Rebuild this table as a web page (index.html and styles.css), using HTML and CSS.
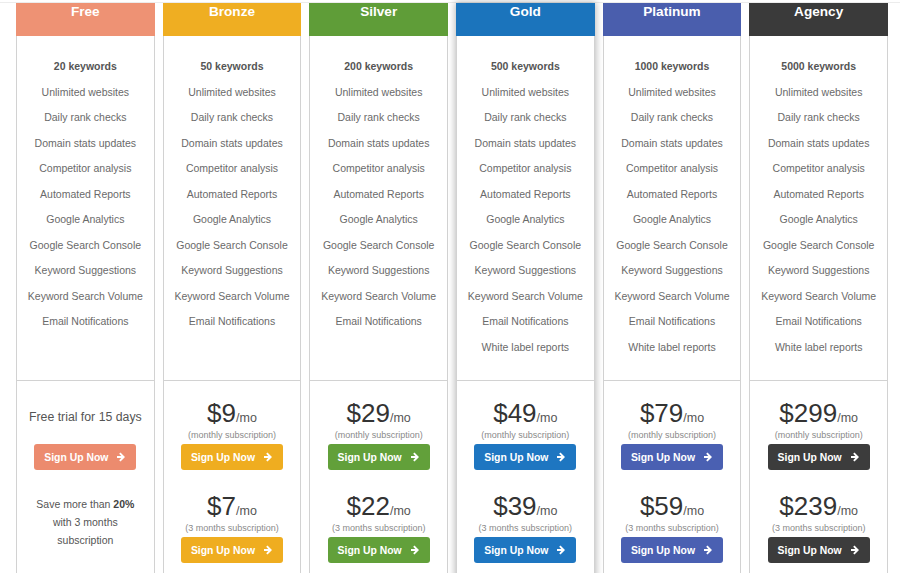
FILE: index.html
```html
<!DOCTYPE html>
<html lang="en">
<head>
<meta charset="utf-8">
<title>Pricing</title>
<link rel="stylesheet" href="styles.css">
</head>
<body>
<svg width="0" height="0" class="defs" aria-hidden="true">
  <symbol id="arrow" viewBox="0 0 10 10">
    <path d="M1 3.9h4.3L3.2 1.8 4.5 0.5 9 5 4.5 9.5 3.2 8.2 5.3 6.1H1z" fill="currentColor"/>
  </symbol>
</svg>
<div class="wrap">
  <div class="plans">

    <section class="plan free">
      <h2 class="plan-head">Free</h2>
      <ul class="features">
        <li class="kw">20 keywords</li>
        <li>Unlimited websites</li>
        <li>Daily rank checks</li>
        <li>Domain stats updates</li>
        <li>Competitor analysis</li>
        <li>Automated Reports</li>
        <li>Google Analytics</li>
        <li>Google Search Console</li>
        <li>Keyword Suggestions</li>
        <li>Keyword Search Volume</li>
        <li>Email Notifications</li>
      </ul>
      <div class="foot">
        <div class="offer">
          <div class="trial">Free trial for 15 days</div>
          <a class="btn" href="#">Sign Up Now <svg class="ico"><use href="#arrow"/></svg></a>
        </div>
        <p class="save">Save more than <b>20%</b><br>with 3 months<br>subscription</p>
      </div>
    </section>

    <section class="plan bronze">
      <h2 class="plan-head">Bronze</h2>
      <ul class="features">
        <li class="kw">50 keywords</li>
        <li>Unlimited websites</li>
        <li>Daily rank checks</li>
        <li>Domain stats updates</li>
        <li>Competitor analysis</li>
        <li>Automated Reports</li>
        <li>Google Analytics</li>
        <li>Google Search Console</li>
        <li>Keyword Suggestions</li>
        <li>Keyword Search Volume</li>
        <li>Email Notifications</li>
      </ul>
      <div class="foot">
        <div class="offer">
          <div class="price">$9<span class="per">/mo</span></div>
          <div class="sub">(monthly subscription)</div>
          <a class="btn" href="#">Sign Up Now <svg class="ico"><use href="#arrow"/></svg></a>
        </div>
        <div class="offer">
          <div class="price">$7<span class="per">/mo</span></div>
          <div class="sub">(3 months subscription)</div>
          <a class="btn" href="#">Sign Up Now <svg class="ico"><use href="#arrow"/></svg></a>
        </div>
      </div>
    </section>

    <section class="plan silver">
      <h2 class="plan-head">Silver</h2>
      <ul class="features">
        <li class="kw">200 keywords</li>
        <li>Unlimited websites</li>
        <li>Daily rank checks</li>
        <li>Domain stats updates</li>
        <li>Competitor analysis</li>
        <li>Automated Reports</li>
        <li>Google Analytics</li>
        <li>Google Search Console</li>
        <li>Keyword Suggestions</li>
        <li>Keyword Search Volume</li>
        <li>Email Notifications</li>
      </ul>
      <div class="foot">
        <div class="offer">
          <div class="price">$29<span class="per">/mo</span></div>
          <div class="sub">(monthly subscription)</div>
          <a class="btn" href="#">Sign Up Now <svg class="ico"><use href="#arrow"/></svg></a>
        </div>
        <div class="offer">
          <div class="price">$22<span class="per">/mo</span></div>
          <div class="sub">(3 months subscription)</div>
          <a class="btn" href="#">Sign Up Now <svg class="ico"><use href="#arrow"/></svg></a>
        </div>
      </div>
    </section>

    <section class="plan gold">
      <h2 class="plan-head">Gold</h2>
      <ul class="features">
        <li class="kw">500 keywords</li>
        <li>Unlimited websites</li>
        <li>Daily rank checks</li>
        <li>Domain stats updates</li>
        <li>Competitor analysis</li>
        <li>Automated Reports</li>
        <li>Google Analytics</li>
        <li>Google Search Console</li>
        <li>Keyword Suggestions</li>
        <li>Keyword Search Volume</li>
        <li>Email Notifications</li>
        <li>White label reports</li>
      </ul>
      <div class="foot">
        <div class="offer">
          <div class="price">$49<span class="per">/mo</span></div>
          <div class="sub">(monthly subscription)</div>
          <a class="btn" href="#">Sign Up Now <svg class="ico"><use href="#arrow"/></svg></a>
        </div>
        <div class="offer">
          <div class="price">$39<span class="per">/mo</span></div>
          <div class="sub">(3 months subscription)</div>
          <a class="btn" href="#">Sign Up Now <svg class="ico"><use href="#arrow"/></svg></a>
        </div>
      </div>
    </section>

    <section class="plan platinum">
      <h2 class="plan-head">Platinum</h2>
      <ul class="features">
        <li class="kw">1000 keywords</li>
        <li>Unlimited websites</li>
        <li>Daily rank checks</li>
        <li>Domain stats updates</li>
        <li>Competitor analysis</li>
        <li>Automated Reports</li>
        <li>Google Analytics</li>
        <li>Google Search Console</li>
        <li>Keyword Suggestions</li>
        <li>Keyword Search Volume</li>
        <li>Email Notifications</li>
        <li>White label reports</li>
      </ul>
      <div class="foot">
        <div class="offer">
          <div class="price">$79<span class="per">/mo</span></div>
          <div class="sub">(monthly subscription)</div>
          <a class="btn" href="#">Sign Up Now <svg class="ico"><use href="#arrow"/></svg></a>
        </div>
        <div class="offer">
          <div class="price">$59<span class="per">/mo</span></div>
          <div class="sub">(3 months subscription)</div>
          <a class="btn" href="#">Sign Up Now <svg class="ico"><use href="#arrow"/></svg></a>
        </div>
      </div>
    </section>

    <section class="plan agency">
      <h2 class="plan-head">Agency</h2>
      <ul class="features">
        <li class="kw">5000 keywords</li>
        <li>Unlimited websites</li>
        <li>Daily rank checks</li>
        <li>Domain stats updates</li>
        <li>Competitor analysis</li>
        <li>Automated Reports</li>
        <li>Google Analytics</li>
        <li>Google Search Console</li>
        <li>Keyword Suggestions</li>
        <li>Keyword Search Volume</li>
        <li>Email Notifications</li>
        <li>White label reports</li>
      </ul>
      <div class="foot">
        <div class="offer">
          <div class="price">$299<span class="per">/mo</span></div>
          <div class="sub">(monthly subscription)</div>
          <a class="btn" href="#">Sign Up Now <svg class="ico"><use href="#arrow"/></svg></a>
        </div>
        <div class="offer">
          <div class="price">$239<span class="per">/mo</span></div>
          <div class="sub">(3 months subscription)</div>
          <a class="btn" href="#">Sign Up Now <svg class="ico"><use href="#arrow"/></svg></a>
        </div>
      </div>
    </section>

  </div>
</div>
</body>
</html>
```

FILE: styles.css
```css
* { box-sizing: border-box; }

html, body {
  margin: 0;
  padding: 0;
  background: #fff;
  font-family: "Liberation Sans", Arial, sans-serif;
  overflow: hidden;
}

.defs { position: absolute; }

.wrap {
  margin-top: 2px;
  border-top: 1px solid #ececec;
  padding: 0 12px 0 16px;
}

.plans {
  display: grid;
  grid-template-columns: repeat(6, 1fr);
  column-gap: 8px;
}

.plan {
  background: #fff;
  text-align: center;
  display: flex;
  flex-direction: column;
}

.plan-head {
  margin: 0;
  height: 33px;
  padding-top: 0;
  line-height: 18px;
  font-size: 13.6px;
  font-weight: bold;
  color: #fff;
}

.features {
  list-style: none;
  margin: 0;
  padding: 18px 0 0;
  height: 344px;
  border-left: 1px solid #d2d2d2;
  border-right: 1px solid #d2d2d2;
}

.features li {
  height: 25.5px;
  line-height: 25.5px;
  font-size: 10.5px;
  color: #6a6a6a;
  white-space: nowrap;
}

.features li.kw {
  font-weight: bold;
  color: #555;
}

.foot {
  border: 1px solid #d2d2d2;
  border-bottom: none;
  padding-top: 16px;
  height: 210px;
}

.offer {
  display: flex;
  flex-direction: column;
  align-items: center;
}

.offer + .offer { margin-top: 20px; }

.price {
  height: 32px;
  line-height: 32px;
  font-size: 26px;
  color: #333;
}

.per {
  font-size: 12.5px;
  color: #555;
}

.sub {
  height: 12px;
  line-height: 12px;
  font-size: 9px;
  color: #8a8a8a;
  white-space: nowrap;
}

.trial {
  height: 44px;
  padding-top: 12px;
  line-height: 16px;
  font-size: 12.3px;
  color: #555;
}

.btn {
  margin-top: 3px;
  width: 102px;
  height: 26px;
  border-radius: 3px;
  display: flex;
  align-items: center;
  justify-content: center;
  gap: 8px;
  color: #fff;
  text-decoration: none;
  font-size: 10.4px;
  font-weight: bold;
}

.ico {
  width: 10px;
  height: 10px;
  color: #fff;
}

.save {
  margin: 25px 0 0;
  line-height: 18px;
  font-size: 10.5px;
  color: #555;
}

.save b { color: #444; }

/* colour themes */
.free .plan-head { background: #ee9274; }
.free .btn { background: #ec8b6e; }
.bronze .plan-head { background: #efae22; }
.bronze .btn { background: #efad20; }
.silver .plan-head { background: #5f9d38; }
.silver .btn { background: #62a03a; }
.gold .plan-head { background: #1b74bc; }
.gold .btn { background: #1e76c1; }
.platinum .plan-head { background: #4a5ead; }
.platinum .btn { background: #4a60b2; }
.agency .plan-head { background: #3a3a3a; }
.agency .btn { background: #3c3c3c; }

.gold {
  position: relative;
  z-index: 1;
  box-shadow: 0 0 7px 1px rgba(0, 0, 0, 0.28);
}
```
